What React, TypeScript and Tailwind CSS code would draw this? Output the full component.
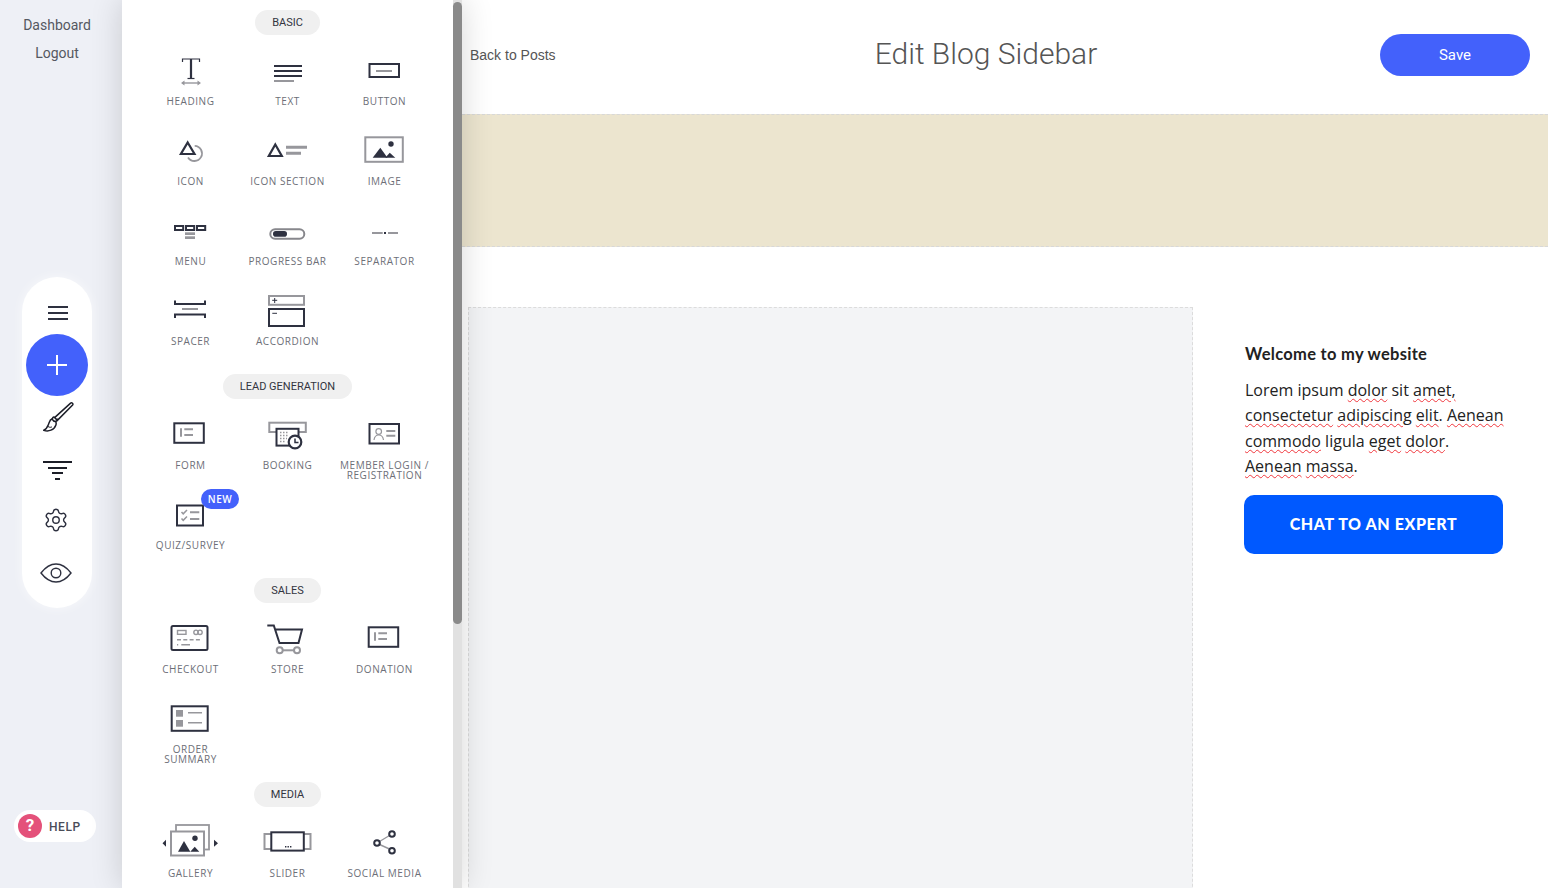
import React from 'react';
import { Settings } from 'lucide-react';

const DARK = '#2e3140';
const GRAY = '#97979c';

const Svg: React.FC<{ children: React.ReactNode }> = ({ children }) => (
  <svg width="97" height="56" viewBox="0 0 97 56" fill="none" className="block">
    {children}
  </svg>
);

const Dk = (d: string, w = 2) => <path d={d} stroke={DARK} strokeWidth={w} />;
const Gr = (d: string, w = 2) => <path d={d} stroke={GRAY} strokeWidth={w} />;

const Mountains = ({ x = 0, y = 0 }: { x?: number; y?: number }) => (
  <g transform={`translate(${x} ${y})`}>
    <path d="M44.3 27.7L51.5 37.7H36.7Z" fill={DARK} />
    <path d="M53.7 32.7L59.3 37.7H49.3Z" fill={DARK} />
    <circle cx="55" cy="24" r="2.7" fill={DARK} />
  </g>
);

const FormLines = ({ x = 0 }: { x?: number }) => (
  <g transform={`translate(${x} 0)`}>
    {Gr('M39 24.3V32.7')}
    {Gr('M42.3 25.3H51M42.3 31H51', 2)}
  </g>
);

const icons: Record<string, React.ReactNode> = {
  heading: (
    <Svg>
      <path d="M40.5 22V19H57.5V22" stroke={DARK} strokeWidth="1.2" />
      {Dk('M49 19V38', 2.2)}
      {Dk('M45.5 38.5H52.5', 1.2)}
      {Gr('M41 43H57', 1.4)}
      <path d="M39 43L42.5 40.5V45.5ZM59 43L55.5 40.5V45.5Z" fill={GRAY} />
    </Svg>
  ),
  text: (
    <Svg>
      {Dk('M35 26H63M35 31H63M35 36H63')}
      {Gr('M35 41H55')}
    </Svg>
  ),
  button: (
    <Svg>
      <rect x="33.5" y="24" width="29.5" height="13" stroke={DARK} strokeWidth="2" />
      {Gr('M40 31H56')}
    </Svg>
  ),
  icon: (
    <Svg>
      {Gr('M52.7 25.8A7.6 7.6 0 1 1 46 37.5', 1.8)}
      <path d="M45.7 22.5L52.5 34H38.9Z" stroke={DARK} strokeWidth="2.2" fill="#fff" />
    </Svg>
  ),
  iconSection: (
    <Svg>
      <path d="M36.3 24.5L42.8 36H29.8Z" stroke={DARK} strokeWidth="2.2" />
      {Gr('M47 27.3H68M47 33.3H62', 3)}
    </Svg>
  ),
  image: (
    <Svg>
      <rect x="29.3" y="17.3" width="37.5" height="24.5" stroke={GRAY} strokeWidth="2" />
      <Mountains />
    </Svg>
  ),
  menu: (
    <Svg>
      <rect x="33" y="26" width="8.2" height="4" stroke={DARK} strokeWidth="2" />
      <rect x="44" y="26" width="8.2" height="4" stroke={DARK} strokeWidth="2" />
      <rect x="55" y="26" width="8.2" height="4" stroke={DARK} strokeWidth="2" />
      <rect x="43" y="32.3" width="10" height="2.7" fill={GRAY} />
      <rect x="43" y="36.3" width="10" height="2.7" fill={GRAY} />
    </Svg>
  ),
  progress: (
    <Svg>
      <rect x="31.3" y="29.3" width="34" height="9.5" rx="4.75" stroke="#87878c" strokeWidth="2" />
      <rect x="34" y="31" width="14" height="5.7" rx="2.8" fill={DARK} />
    </Svg>
  ),
  separator: (
    <Svg>
      {Gr('M36 33H46.7M52 33H62', 2)}
      <rect x="48" y="32" width="2" height="2" fill={DARK} />
    </Svg>
  ),
  spacer: (
    <Svg>
      {Dk('M33 20.5V24H63V20.5', 2)}
      {Dk('M33 38V34.5H63V38', 2)}
      {Gr('M40 29H56')}
    </Svg>
  ),
  accordion: (
    <Svg>
      <rect x="30" y="16" width="35" height="8.8" stroke={GRAY} strokeWidth="2" />
      {Dk('M33.2 20.3H38.2M35.7 18V23', 1)}
      <rect x="30" y="29" width="35" height="17" stroke={DARK} strokeWidth="2" />
      {Dk('M33.3 33.3H38', 1)}
    </Svg>
  ),
  form: (
    <Svg>
      <rect x="32.3" y="19.3" width="29.5" height="19.5" stroke={DARK} strokeWidth="2" />
      <FormLines />
    </Svg>
  ),
  booking: (
    <Svg>
      <rect x="30.3" y="18.7" width="36.5" height="9.3" stroke={GRAY} strokeWidth="2" />
      <rect x="37.5" y="24.8" width="22" height="16.8" stroke={DARK} strokeWidth="2" fill="#fff" />
      <path d="M41 28.5H50M41 31.5H50M41 34.5H48M41 37.5H46" stroke={GRAY} strokeWidth="1.5" strokeDasharray="1.5 1.5" />
      <circle cx="56" cy="38" r="6.3" stroke={DARK} strokeWidth="2.2" fill="#fff" />
      {Dk('M56 34.5V38.5H59.5', 1.5)}
    </Svg>
  ),
  member: (
    <Svg>
      <rect x="33.5" y="20" width="29.5" height="19.5" stroke={DARK} strokeWidth="2" />
      <circle cx="42.7" cy="27.5" r="2.8" stroke={GRAY} strokeWidth="1.2" />
      <path d="M38 36C38.5 32.5 40.5 31 42.7 31S47 32.5 47.5 36" stroke={GRAY} strokeWidth="1.2" />
      {Gr('M50.3 27H59.3M50.3 31.7H59.3', 2)}
    </Svg>
  ),
  quiz: (
    <Svg>
      <rect x="35" y="21.5" width="26" height="20" stroke={DARK} strokeWidth="2" />
      {Gr('M39.5 28L41.2 29.8L45 26M39.5 34.5L41.2 36.3L45 32.5', 1.5)}
      {Gr('M48 28.3H57.3M48 35H57.3', 2)}
    </Svg>
  ),
  checkout: (
    <Svg>
      <rect x="29.5" y="18" width="36" height="24" rx="1.5" stroke={DARK} strokeWidth="2" />
      <rect x="35.5" y="22.5" width="8.5" height="3.8" stroke={GRAY} strokeWidth="1.4" />
      <circle cx="54" cy="24.3" r="2.2" stroke={GRAY} strokeWidth="1.4" />
      <circle cx="58" cy="24.3" r="2.2" stroke={GRAY} strokeWidth="1.4" />
      <path d="M35 31.7H60" stroke={GRAY} strokeWidth="1.4" strokeDasharray="4 2.3" />
      {Gr('M35 36.7H36.2M39.3 36.7H48', 1.4)}
    </Svg>
  ),
  store: (
    <Svg>
      {Dk('M28.3 17.5H34.8L40.5 35H59.5L63 21.5H36', 2)}
      <circle cx="40.7" cy="42.3" r="3" stroke={GRAY} strokeWidth="2" />
      <circle cx="58" cy="42.3" r="3" stroke={GRAY} strokeWidth="2" />
      {Gr('M43.7 42.3H55', 2)}
    </Svg>
  ),
  donation: (
    <Svg>
      <rect x="32.7" y="19.3" width="29.5" height="19.5" stroke={DARK} strokeWidth="2" />
      <FormLines />
    </Svg>
  ),
  order: (
    <Svg>
      <rect x="29.7" y="18.3" width="36" height="24.5" stroke={DARK} strokeWidth="2" />
      <rect x="34" y="22" width="7" height="6.7" fill={GRAY} />
      <rect x="34" y="32" width="7" height="6.7" fill={GRAY} />
      {Gr('M46 24.7H60M46 34.7H60', 1.5)}
    </Svg>
  ),
  gallery: (
    <Svg>
      <rect x="34" y="13" width="33" height="24.5" stroke={GRAY} strokeWidth="1.8" />
      <rect x="29" y="19.5" width="33" height="24" stroke={GRAY} strokeWidth="2" fill="#fff" />
      <path d="M42 29L48.3 39.7H36Z" fill={DARK} />
      <path d="M52.7 34.7L57.3 39.7H48.3Z" fill={DARK} />
      <circle cx="53" cy="26.3" r="2.7" fill={DARK} />
      <path d="M24 27.8V34.8L20.5 31.3ZM72 27.8V34.8L76 31.3Z" fill={DARK} />
    </Svg>
  ),
  slider: (
    <Svg>
      <rect x="25.5" y="22" width="8" height="15" stroke={GRAY} strokeWidth="2" />
      <rect x="63.5" y="22" width="8" height="15" stroke={GRAY} strokeWidth="2" />
      <rect x="32.3" y="20.3" width="32.5" height="18.3" stroke={DARK} strokeWidth="2" fill="#fff" />
      <path d="M46 34.8H52.5" stroke={DARK} strokeWidth="1.6" strokeDasharray="1.4 1.1" />
    </Svg>
  ),
  social: (
    <Svg>
      {Gr('M43.5 29.5L53.5 23.5M43.5 32.5L53.5 37', 1.4)}
      <circle cx="56" cy="22" r="2.8" stroke={DARK} strokeWidth="2" fill="#fff" />
      <circle cx="41" cy="31" r="2.8" stroke={DARK} strokeWidth="2" fill="#fff" />
      <circle cx="56" cy="38.7" r="2.8" stroke={DARK} strokeWidth="2" fill="#fff" />
    </Svg>
  ),
};

type Item = { key: string; label: string[]; isNew?: boolean };

const sections: { title: string; items: Item[] }[] = [
  {
    title: 'BASIC',
    items: [
      { key: 'heading', label: ['HEADING'] },
      { key: 'text', label: ['TEXT'] },
      { key: 'button', label: ['BUTTON'] },
      { key: 'icon', label: ['ICON'] },
      { key: 'iconSection', label: ['ICON SECTION'] },
      { key: 'image', label: ['IMAGE'] },
      { key: 'menu', label: ['MENU'] },
      { key: 'progress', label: ['PROGRESS BAR'] },
      { key: 'separator', label: ['SEPARATOR'] },
      { key: 'spacer', label: ['SPACER'] },
      { key: 'accordion', label: ['ACCORDION'] },
    ],
  },
  {
    title: 'LEAD GENERATION',
    items: [
      { key: 'form', label: ['FORM'] },
      { key: 'booking', label: ['BOOKING'] },
      { key: 'member', label: ['MEMBER LOGIN /', 'REGISTRATION'] },
      { key: 'quiz', label: ['QUIZ/SURVEY'], isNew: true },
    ],
  },
  {
    title: 'SALES',
    items: [
      { key: 'checkout', label: ['CHECKOUT'] },
      { key: 'store', label: ['STORE'] },
      { key: 'donation', label: ['DONATION'] },
      { key: 'order', label: ['ORDER', 'SUMMARY'] },
    ],
  },
  {
    title: 'MEDIA',
    items: [
      { key: 'gallery', label: ['GALLERY'] },
      { key: 'slider', label: ['SLIDER'] },
      { key: 'social', label: ['SOCIAL MEDIA'] },
    ],
  },
];

const ElementItem: React.FC<{ item: Item }> = ({ item }) => (
  <div className="relative h-[80px] w-[97px]">
    <div className="h-[56px]">{icons[item.key]}</div>
    {item.isNew && (
      <span className="absolute left-[59px] top-[5px] flex h-[20px] w-[38px] items-center justify-center rounded-full bg-[#4361fb] font-['Open_Sans',sans-serif] text-[10px] font-semibold tracking-[0.5px] text-white">
        NEW
      </span>
    )}
    <div className="whitespace-nowrap text-center font-['Open_Sans',sans-serif] text-[10px] leading-[10px] tracking-[0.55px] text-[#6d6f78]">
      {item.label.map((l) => (
        <div key={l}>{l}</div>
      ))}
    </div>
  </div>
);

const Misspelled: React.FC<{ children: React.ReactNode }> = ({ children }) => (
  <span className="underline decoration-[#f0363c] decoration-wavy decoration-[1.2px] underline-offset-2">{children}</span>
);

const RailNav = () => (
  <div className="flex h-[331px] w-[70px] flex-col items-center rounded-[35px] bg-white text-[#2e3140] shadow-[0_0_12px_rgba(255,255,255,0.6)]">
    <div className="ml-[2px] mt-[29px] flex h-[14px] w-[20px] flex-col justify-between">
      <div className="h-[2px] bg-[#2e3140]" />
      <div className="h-[2px] bg-[#2e3140]" />
      <div className="h-[2px] bg-[#2e3140]" />
    </div>
    <div className="relative mt-[14px] flex h-[62px] w-[62px] shrink-0 items-center justify-center rounded-full bg-[#4361fb]">
      <svg width="20" height="20" viewBox="0 0 20 20">
        <path d="M10 0V20M0 10H20" stroke="#fff" strokeWidth="2" />
      </svg>
    </div>
    <svg width="31" height="31" viewBox="0 0 31 31" fill="none" className="ml-[2px] mt-[6px]" stroke="#1c1e28" strokeWidth="1.5">
      <path d="M27.6 1.2C28.9 0.2 30.6 1.6 29.6 3L14.4 18.4L11.6 15.6Z" />
      <path d="M11.6 15.2C10 14.8 9 16 9.6 17.6C10.2 18.8 11.8 19.6 13 19.2C14.4 18.6 14.6 17.4 14 16.6" />
      <path d="M9.2 16.8C6.4 17.8 6.4 20.4 5.2 23C4.2 25.6 2.6 27.6 0.8 28.2C5.4 30 11.2 28 12.8 23.2C13.4 21.8 13.2 20.6 12.8 19.4" />
      <path d="M5 24.5C6.5 25.5 8 25.5 9 24.8" strokeWidth="1" />
    </svg>
    <div className="mt-[28px] flex flex-col items-center gap-[3.5px]">
      <div className="h-[2px] w-[29px] bg-[#1c1e28]" />
      <div className="h-[2px] w-[19px] bg-[#1c1e28]" />
      <div className="h-[2px] w-[11px] bg-[#1c1e28]" />
      <div className="h-[2px] w-[5px] bg-[#1c1e28]" />
    </div>
    <Settings size={26} strokeWidth={1.3} className="ml-[-2px] mt-[27px] text-[#2e3140]" />
    <svg width="32" height="20" viewBox="0 0 32 20" fill="none" className="ml-[-2px] mt-[30px]" stroke="#2e3140" strokeWidth="1.4">
      <path d="M1 10C6 3.5 11 1 16 1S26 3.5 31 10C26 16.5 21 19 16 19S6 16.5 1 10Z" />
      <circle cx="16" cy="10" r="4.8" />
    </svg>
  </div>
);

export default function App() {
  return (
    <div className="flex h-screen w-full overflow-hidden bg-white font-['Roboto',sans-serif]">
      {/* left rail */}
      <aside className="flex h-full w-[122px] shrink-0 flex-col bg-[#eef0f6]">
        <div className="flex flex-col items-center gap-[12px] pr-[8px] pt-[17px] text-[14px] leading-[16px] text-[#555861]">
          <a>Dashboard</a>
          <a>Logout</a>
        </div>
        <div className="ml-[22px] mt-[216px]">
          <RailNav />
        </div>
        <div className="ml-[14px] mt-[202px] flex h-[32px] w-[82px] items-center rounded-full bg-white pl-[4px]">
          <span className="flex h-[24px] w-[24px] items-center justify-center rounded-full bg-[#e4517a] text-[17px] font-bold text-white">?</span>
          <span className="ml-[7px] mt-[1px] text-[12px] font-medium tracking-[0.6px] text-[#4a4c58]">HELP</span>
        </div>
      </aside>

      {/* elements panel */}
      <div className="relative z-10 flex h-full w-[340px] shrink-0 bg-white shadow-[0_0_30px_rgba(0,0,0,0.16)]">
        <div className="h-full w-[331px] overflow-hidden px-[20px] pt-[10px]">
          {sections.map((section) => (
            <section key={section.title} className="mb-[14px]">
              <div className="flex justify-center">
                <span className="flex h-[25px] items-center rounded-full bg-[#f0f0f0] px-[17px] pt-[1px] text-[11px] text-[#33353f]">
                  {section.title}
                </span>
              </div>
              <div className="mt-[5px] grid grid-cols-[repeat(3,97px)]">
                {section.items.map((item) => (
                  <ElementItem key={item.key} item={item} />
                ))}
              </div>
            </section>
          ))}
        </div>
        <div className="flex h-full w-[9px] flex-col bg-[#e1e1e1]">
          <div className="mt-[2px] h-[622px] rounded-full bg-[#8a8a8a]" />
        </div>
      </div>

      {/* page */}
      <main className="flex h-full min-w-0 flex-1 flex-col overflow-hidden">
        <header className="flex h-[114px] shrink-0 items-center pb-[4px] pl-[8px] pr-[18px]">
          <a className="w-[122px] font-['Liberation_Sans',sans-serif] text-[14px] text-[#555]">Back to Posts</a>
          <h1 className="mb-[4px] flex-1 text-center text-[30px] font-light text-[#555]">Edit Blog Sidebar</h1>
          <button className="h-[42px] w-[150px] rounded-full bg-[#4361fb] text-[15px] text-white">Save</button>
        </header>
        <div className="h-[133px] shrink-0 border-y border-dashed border-[#d8d8d8] bg-[#ece5cf]" />
        <div className="mt-[60px] flex min-h-0 flex-1 pl-[6px]">
          <div className="h-[640px] w-[725px] shrink-0 border border-dashed border-[#dcdcdc] bg-[#f3f4f6]" />
          <div className="ml-[51px] w-[260px] pt-[37px]">
            <h2 className="ml-[1px] font-['Lato',sans-serif] text-[16.5px] font-bold leading-[20px] tracking-[0.3px] text-[#222]">Welcome to my website</h2>
            <p className="ml-[1px] mt-[13.5px] font-['Open_Sans',sans-serif] text-[16px] leading-[25.6px] text-[#222]">
              Lorem ipsum <Misspelled>dolor</Misspelled> sit <Misspelled>amet,</Misspelled>{' '}
              <Misspelled>consectetur</Misspelled> <Misspelled>adipiscing</Misspelled> <Misspelled>elit</Misspelled>.{' '}
              <Misspelled>Aenean</Misspelled> <Misspelled>commodo</Misspelled> ligula <Misspelled>eget</Misspelled>{' '}
              <Misspelled>dolor</Misspelled>. <Misspelled>Aenean</Misspelled> <Misspelled>massa</Misspelled>.
            </p>
            <button className="mt-[15.5px] h-[59px] w-[259px] rounded-[10px] bg-[#0059ff] pb-[2px] font-['Lato',sans-serif] text-[16px] font-black tracking-[0.6px] text-white">
              CHAT TO AN EXPERT
            </button>
          </div>
        </div>
      </main>
    </div>
  );
}
